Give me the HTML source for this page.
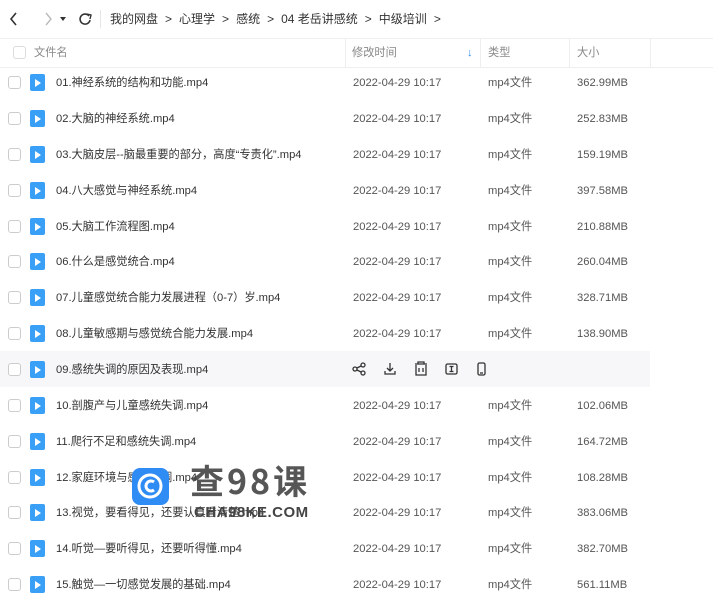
<!DOCTYPE html><html><head><meta charset="utf-8"><style>
body{margin:0;width:713px;height:600px;overflow:hidden;background:#fff;font-family:"Liberation Sans","Noto Sans CJK SC",sans-serif;color:#333;font-size:11.2px;position:relative}
.top{position:absolute;top:0;left:0;width:713px;height:38px}
.bc{position:absolute;top:11px;left:110px;font-size:12px;line-height:16px;color:#333;white-space:nowrap}
.bc span{margin:0 7px}
.hdr{position:absolute;top:38px;left:0;width:713px;height:28px;border-top:1px solid #f0f0f0;border-bottom:1px solid #eee;color:#888}
.hdr div{position:absolute;top:6px;line-height:16px}
.sep{position:absolute;top:0;width:1px;height:28px;background:#eee}
.cb{position:absolute;width:11px;height:11px;border:1px solid #ccc;border-radius:3px;background:#fff}
.row{position:absolute;left:0;width:650px;height:36px}
.row div{position:absolute;top:11px;line-height:16px;white-space:nowrap}
.ic{position:absolute;left:30px;top:10px;width:15px;height:17px;background:#3aa0f7;border-radius:2px}
.ic:after{content:"";position:absolute;left:5px;top:4.5px;border-left:6px solid #fff;border-top:4px solid transparent;border-bottom:4px solid transparent}
.g{color:#555}
</style></head><body>
<div class="top">
<svg style="position:absolute;left:8px;top:11px" width="90" height="16"><path d="M8 2 L3 8 L8 14" stroke="#333" stroke-width="1.6" fill="none"/><path d="M38 2 L43 8 L38 14" stroke="#bbb" stroke-width="1.4" fill="none"/><path d="M52 6 L58 6 L55 10Z" fill="#333"/><path d="M81 5 A5 5 0 1 0 82 9" stroke="#333" stroke-width="1.6" fill="none"/><path d="M79 3 L83 4 L82 8" stroke="#333" stroke-width="1.4" fill="none"/></svg>
<div style="position:absolute;left:100px;top:10px;width:1px;height:18px;background:#e5e5e5"></div>
<div class="bc">我的网盘<span>&gt;</span>心理学<span>&gt;</span>感统<span>&gt;</span>04 老岳讲感统<span>&gt;</span>中级培训<span>&gt;</span></div>
</div>
<div class="hdr">
<div class="cb" style="left:13px;top:7px;border-color:#ddd"></div>
<div style="left:34px">文件名</div>
<span class="sep" style="left:345px"></span>
<div style="left:352px">修改时间</div><div style="left:467px;color:#2a8cf0;font-weight:bold">↓</div>
<span class="sep" style="left:480px"></span>
<div style="left:488px">类型</div>
<span class="sep" style="left:569px"></span>
<div style="left:577px">大小</div>
<span class="sep" style="left:650px"></span>
</div>
<div class="row" style="top:64px"><span class="cb" style="left:8px;top:12px"></span><span class="ic"></span><div style="left:56px">01.神经系统的结构和功能.mp4</div><div class="g" style="left:353px">2022-04-29 10:17</div><div class="g" style="left:488px">mp4文件</div><div class="g" style="left:577px">362.99MB</div></div>
<div class="row" style="top:100px"><span class="cb" style="left:8px;top:12px"></span><span class="ic"></span><div style="left:56px">02.大脑的神经系统.mp4</div><div class="g" style="left:353px">2022-04-29 10:17</div><div class="g" style="left:488px">mp4文件</div><div class="g" style="left:577px">252.83MB</div></div>
<div class="row" style="top:136px"><span class="cb" style="left:8px;top:12px"></span><span class="ic"></span><div style="left:56px">03.大脑皮层--脑最重要的部分，高度“专责化”.mp4</div><div class="g" style="left:353px">2022-04-29 10:17</div><div class="g" style="left:488px">mp4文件</div><div class="g" style="left:577px">159.19MB</div></div>
<div class="row" style="top:172px"><span class="cb" style="left:8px;top:12px"></span><span class="ic"></span><div style="left:56px">04.八大感觉与神经系统.mp4</div><div class="g" style="left:353px">2022-04-29 10:17</div><div class="g" style="left:488px">mp4文件</div><div class="g" style="left:577px">397.58MB</div></div>
<div class="row" style="top:208px"><span class="cb" style="left:8px;top:12px"></span><span class="ic"></span><div style="left:56px">05.大脑工作流程图.mp4</div><div class="g" style="left:353px">2022-04-29 10:17</div><div class="g" style="left:488px">mp4文件</div><div class="g" style="left:577px">210.88MB</div></div>
<div class="row" style="top:243px"><span class="cb" style="left:8px;top:12px"></span><span class="ic"></span><div style="left:56px">06.什么是感觉统合.mp4</div><div class="g" style="left:353px">2022-04-29 10:17</div><div class="g" style="left:488px">mp4文件</div><div class="g" style="left:577px">260.04MB</div></div>
<div class="row" style="top:279px"><span class="cb" style="left:8px;top:12px"></span><span class="ic"></span><div style="left:56px">07.儿童感觉统合能力发展进程（0-7）岁.mp4</div><div class="g" style="left:353px">2022-04-29 10:17</div><div class="g" style="left:488px">mp4文件</div><div class="g" style="left:577px">328.71MB</div></div>
<div class="row" style="top:315px"><span class="cb" style="left:8px;top:12px"></span><span class="ic"></span><div style="left:56px">08.儿童敏感期与感觉统合能力发展.mp4</div><div class="g" style="left:353px">2022-04-29 10:17</div><div class="g" style="left:488px">mp4文件</div><div class="g" style="left:577px">138.90MB</div></div>
<div class="row" style="top:351px;background:#f7f7f9"><span class="cb" style="left:8px;top:12px"></span><span class="ic"></span><div style="left:56px">09.感统失调的原因及表现.mp4</div>
<svg style="position:absolute;left:352px;top:10px" width="140" height="16" fill="none" stroke="#333" stroke-width="1.3"><circle cx="3" cy="8" r="2"/><circle cx="11" cy="4" r="2"/><circle cx="11" cy="12" r="2"/><path d="M5 7L9 5M5 9L9 11"/><path d="M38 2V10M35 7L38 10L41 7M33 10V13H43V10"/><path d="M63 3H75M66 3V1H72V3M64 4V14H74V4M67 7V11M71 7V11"/><rect x="94" y="3" width="11" height="10" rx="1.5"/><path d="M97.5 5.5H101.5M99.5 5.5V10.5M97.5 10.5H101.5"/><rect x="126" y="2" width="7" height="12" rx="1.5"/><path d="M128 12H131"/></svg></div>
<div class="row" style="top:387px"><span class="cb" style="left:8px;top:12px"></span><span class="ic"></span><div style="left:56px">10.剖腹产与儿童感统失调.mp4</div><div class="g" style="left:353px">2022-04-29 10:17</div><div class="g" style="left:488px">mp4文件</div><div class="g" style="left:577px">102.06MB</div></div>
<div class="row" style="top:423px"><span class="cb" style="left:8px;top:12px"></span><span class="ic"></span><div style="left:56px">11.爬行不足和感统失调.mp4</div><div class="g" style="left:353px">2022-04-29 10:17</div><div class="g" style="left:488px">mp4文件</div><div class="g" style="left:577px">164.72MB</div></div>
<div class="row" style="top:459px"><span class="cb" style="left:8px;top:12px"></span><span class="ic"></span><div style="left:56px">12.家庭环境与感统失调.mp4</div><div class="g" style="left:353px">2022-04-29 10:17</div><div class="g" style="left:488px">mp4文件</div><div class="g" style="left:577px">108.28MB</div></div>
<div class="row" style="top:494px"><span class="cb" style="left:8px;top:12px"></span><span class="ic"></span><div style="left:56px">13.视觉，要看得见，还要认真看清楚.mp4</div><div class="g" style="left:353px">2022-04-29 10:17</div><div class="g" style="left:488px">mp4文件</div><div class="g" style="left:577px">383.06MB</div></div>
<div class="row" style="top:530px"><span class="cb" style="left:8px;top:12px"></span><span class="ic"></span><div style="left:56px">14.听觉—要听得见，还要听得懂.mp4</div><div class="g" style="left:353px">2022-04-29 10:17</div><div class="g" style="left:488px">mp4文件</div><div class="g" style="left:577px">382.70MB</div></div>
<div class="row" style="top:566px"><span class="cb" style="left:8px;top:12px"></span><span class="ic"></span><div style="left:56px">15.触觉—一切感觉发展的基础.mp4</div><div class="g" style="left:353px">2022-04-29 10:17</div><div class="g" style="left:488px">mp4文件</div><div class="g" style="left:577px">561.11MB</div></div>
<div style="position:absolute;left:132px;top:468px;width:37px;height:37px;border-radius:8px;background:#2f8cf5"><svg width="37" height="37" fill="none" stroke="#fff" stroke-width="3"><circle cx="18" cy="18" r="11"/><path d="M22 14A5 5 0 1 0 22 22"/></svg></div>
<div style="position:absolute;left:190px;top:458px;font-size:34px;line-height:44px;font-weight:bold;color:#444;letter-spacing:3px;font-family:'Noto Sans CJK SC',sans-serif;opacity:.9">查98课</div>
<div style="position:absolute;left:194px;top:504px;font-size:15px;line-height:18px;font-weight:bold;color:#444;letter-spacing:0.5px">CHA98KE.COM</div>
</body></html>
